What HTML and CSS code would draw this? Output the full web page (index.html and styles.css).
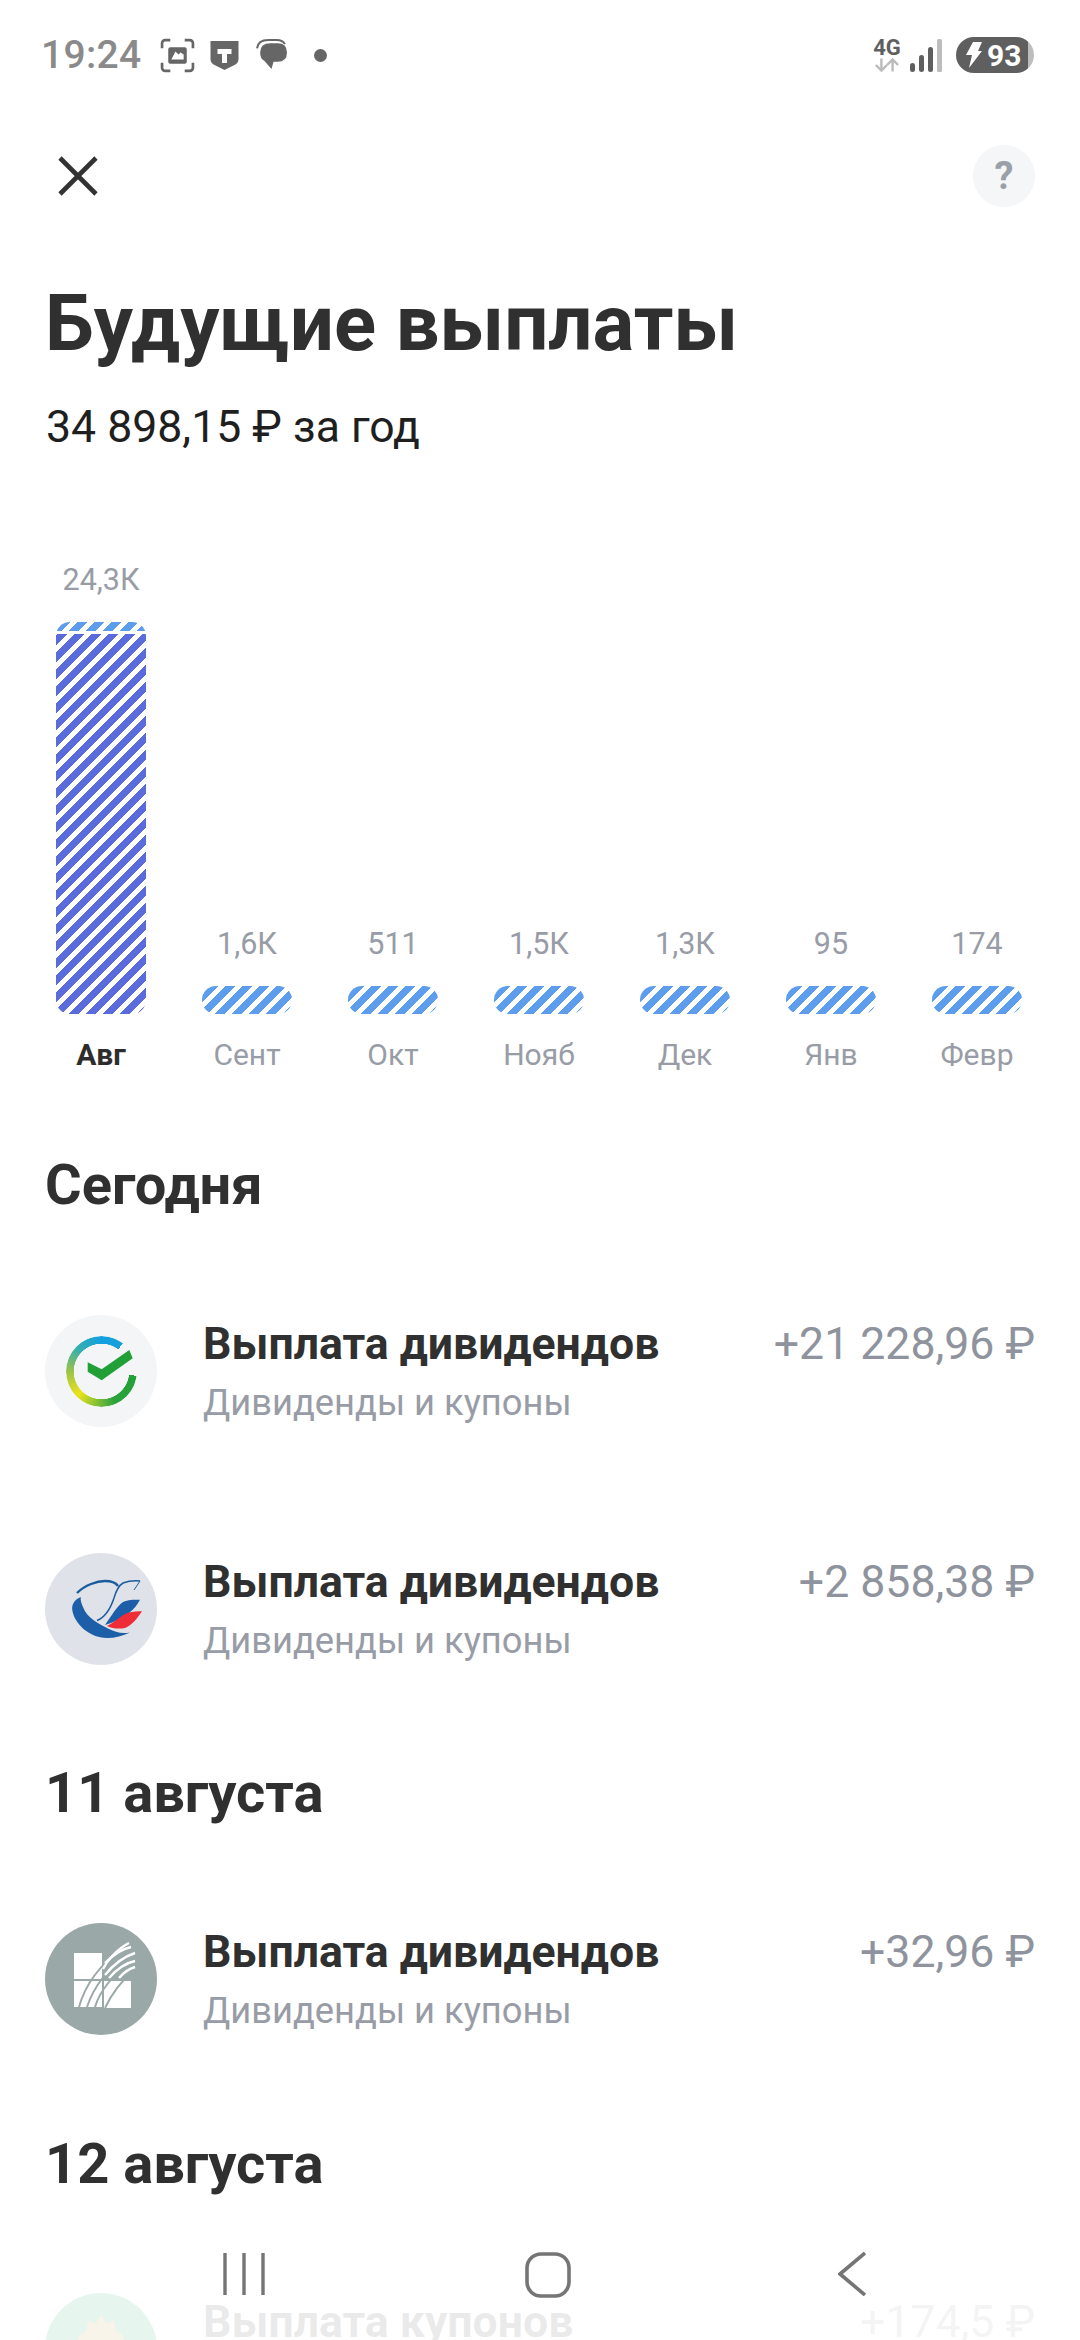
FILE: index.html
```html
<!DOCTYPE html>
<html lang="ru">
<head>
<meta charset="utf-8">
<title>Будущие выплаты</title>
<link rel="stylesheet" href="styles.css">
</head>
<body>
<div class="page">
  <header class="status">
    <div class="status-left">
      <span class="time">19:24</span>
      <svg class="si si-shot" viewBox="0 0 34 34"><path d="M2 10V5a3 3 0 0 1 3-3h5M24 2h5a3 3 0 0 1 3 3v5M32 24v5a3 3 0 0 1-3 3h-5M10 32H5a3 3 0 0 1-3-3v-5" fill="none" stroke="#666" stroke-width="2.6"/><path fill-rule="evenodd" d="M10 9h14a2 2 0 0 1 2 2v12a2 2 0 0 1-2 2H10a2 2 0 0 1-2-2V11a2 2 0 0 1 2-2zm1 12h12v-5l-3-2-2 2-3-3z" fill="#666"/></svg>
      <svg class="si si-t" viewBox="0 0 28 29"><path d="M0 0h28v18q0 4-4 6l-10 5-10-5q-4-2-4-6z" fill="#666"/><path d="M7 8h14v5h-4.500v9h-5v-9H7z" fill="#fff"/></svg>
      <svg class="si si-chat" viewBox="0 0 31 31"><path d="M1 9q1-8 11-8h8q6 0 8 4" fill="none" stroke="#666" stroke-width="2"/><path d="M14 4h7q9 0 9 9t-9 9h-4l-2 7-7-8Q4 19 4 13q0-9 10-9z" fill="#666"/></svg>
      <span class="dot"></span>
    </div>
    <div class="status-right">
      <div class="net">
        <span class="net-label">4G</span>
        <svg class="net-arrows" viewBox="0 0 28 14"><path d="M8 0v12M2 7l6 6 6-6" fill="none" stroke="#bbb" stroke-width="2.600"/><path d="M20 14V2M14 7l6-6 6 6" fill="none" stroke="#bbb" stroke-width="2.600"/></svg>
      </div>
      <svg class="signal" viewBox="0 0 32 33"><rect x="0" y="24" width="5" height="9" rx="2.500" fill="#5f5f5f"/><rect x="9" y="16" width="5" height="17" rx="2.500" fill="#5f5f5f"/><rect x="18" y="8" width="5" height="25" rx="2.500" fill="#5f5f5f"/><rect x="27" y="0" width="5" height="33" rx="1.500" fill="#bdbdbd"/></svg>
      <div class="battery">
        <svg class="bolt" viewBox="0 0 16 26"><path d="M7 0h9l-4 9h4L3 26l3-13H0z" fill="#fff"/></svg>
        <span>93</span>
      </div>
    </div>
  </header>

  <div class="toolbar">
    <svg class="close" viewBox="0 0 40 40"><path d="M2 2l36 36M38 2L2 38" fill="none" stroke="#333" stroke-width="4.600"/></svg>
    <span class="help">?</span>
  </div>

  <h1 class="title">Будущие выплаты</h1>
  <p class="subtitle">34 898,15 ₽ за год</p>

  <section class="chart">
    <div class="col"><span class="val">24,3К</span><div class="bar bar-big"><div class="bar-cap"></div><div class="bar-main"></div></div><span class="mon mon-active">Авг</span></div>
    <div class="col"><span class="val">1,6К</span><div class="bar bar-small"></div><span class="mon">Сент</span></div>
    <div class="col"><span class="val">511</span><div class="bar bar-small"></div><span class="mon">Окт</span></div>
    <div class="col"><span class="val">1,5К</span><div class="bar bar-small"></div><span class="mon">Нояб</span></div>
    <div class="col"><span class="val">1,3К</span><div class="bar bar-small"></div><span class="mon">Дек</span></div>
    <div class="col"><span class="val">95</span><div class="bar bar-small"></div><span class="mon">Янв</span></div>
    <div class="col"><span class="val">174</span><div class="bar bar-small"></div><span class="mon">Февр</span></div>
  </section>

  <h2 class="day day-today">Сегодня</h2>
  <div class="row row-first">
    <div class="avatar av-sber">
      <div class="sber-ring"></div>
      <svg class="logo" viewBox="0 0 112 112"><path d="M42.700 47.300v9.400l14 8.600 31-22-3.400-8.300-27.600 19.300z" fill="#21a038"/></svg>
    </div>
    <div class="row-text"><div class="row-title">Выплата дивидендов</div><div class="row-sub">Дивиденды и купоны</div></div>
    <div class="amount">+21 228,96 ₽</div>
  </div>
  <div class="row row-second">
    <div class="avatar av-rus">
      <svg class="logo" viewBox="0 0 112 112">
        <path d="M35.700 44C29 47 26.500 52 27.300 57C29 70 44 85 62 85C70 85 78 83 85 79.500C76 81 70 79 64 76C54 71 42 65 38 54C36.800 51 35.300 48 35.700 44z" fill="#1c5ea8"/>
        <path d="M32 40C40 32 52 28 60 28C67 28 71 30 73 33" fill="none" stroke="#1a5c9e" stroke-width="2.400"/>
        <path d="M95 28C88 27.500 82 28.500 78 30C73 33 71 38 69 45C66 54 61 64 52 67.500" fill="none" stroke="#1a5c9e" stroke-width="1.500"/>
        <path d="M95 28L89 37" fill="none" stroke="#1a5c9e" stroke-width="1"/>
        <path d="M95 46.700C87 46.500 82 47 78 49C72 53 67 62 60 72C68 70 76 65 84 60C89 56 92 52 95 46.700z" fill="#1c5ea8"/>
        <path d="M97 58.300C90 58 85 59 80 61C73 65 68 70 62 73C68 76 75 76 80 75C86 73 92 66 97 58.300z" fill="#ee2d36"/>
      </svg>
    </div>
    <div class="row-text"><div class="row-title">Выплата дивидендов</div><div class="row-sub">Дивиденды и купоны</div></div>
    <div class="amount">+2 858,38 ₽</div>
  </div>

  <h2 class="day day-11">11 августа</h2>
  <div class="row row-third">
    <div class="avatar av-grain">
      <svg class="logo" viewBox="0 0 112 112">
        <rect x="29" y="30" width="28" height="26" fill="#fff"/>
        <rect x="29" y="58" width="28" height="26" fill="#fff"/>
        <rect x="59" y="58" width="27" height="27" fill="#fff"/>
        <g fill="none" stroke="#9aa9a7" stroke-width="2">
          <path d="M34 84C40 62 56 40 74 30"/>
          <path d="M42 84C48 66 62 44 84 32"/>
          <path d="M50 84C54 70 68 50 88 38"/>
          <path d="M60 85C66 72 74 60 90 46"/>
        </g>
        <g fill="none" stroke="#fff" stroke-width="2.400">
          <path d="M58 46C62 38 72 26 84 20"/>
          <path d="M60 40C68 32 76 26 86 24"/>
          <path d="M60 52C68 42 78 34 90 30"/>
          <path d="M64 55C72 46 80 40 90 38"/>
          <path d="M74 55C78 50 84 46 90 44"/>
        </g>
      </svg>
    </div>
    <div class="row-text"><div class="row-title">Выплата дивидендов</div><div class="row-sub">Дивиденды и купоны</div></div>
    <div class="amount">+32,96 ₽</div>
  </div>

  <h2 class="day day-12">12 августа</h2>
  <div class="row row-fourth">
    <div class="avatar av-last">
      <svg class="logo" viewBox="0 0 112 112"><path d="M56 22l5 8 8-2 2 10 9 6-6 9 2 9-20 8-20-8 2-9-6-9 9-6 2-10 8 2z" fill="#b98a1e"/></svg>
    </div>
    <div class="row-text"><div class="row-title">Выплата купонов</div></div>
    <div class="amount">+174,5 ₽</div>
  </div>

  <nav class="navbar">
    <svg class="nav-recent" viewBox="0 0 42 42"><path d="M2 0v42M21 0v42M40 0v42" fill="none" stroke="#757575" stroke-width="3.400"/></svg>
    <svg class="nav-home" viewBox="0 0 46 46"><rect x="2" y="2" width="42" height="42" rx="14" fill="none" stroke="#757575" stroke-width="3.600"/></svg>
    <svg class="nav-back" viewBox="0 0 28 44"><path d="M27 1L2 22l25 21" fill="none" stroke="#757575" stroke-width="3.600"/></svg>
  </nav>
</div>
</body>
</html>
```
FILE: styles.css
```css
* { box-sizing: border-box; }
html, body { margin: 0; padding: 0; background: #fff; }
.page {
  position: relative;
  width: 1080px;
  height: 2340px;
  overflow: hidden;
  font-family: Roboto, "Noto Sans", sans-serif;
  color: #303030;
}

/* status bar */
.status {
  height: 144px;
  padding: 36px 46px 0 41px;
  display: flex;
  justify-content: space-between;
  align-items: flex-start;
}
.status-left, .status-right { display: flex; align-items: center; height: 38px; }
.time { font-size: 39px; font-weight: 500; color: #8a8a8a; width: 119px; line-height: 38px; letter-spacing: .3px; }
.si { display: block; }
.si-shot { width: 35px; height: 35px; }
.si-t { width: 29px; height: 29px; margin-left: 15px; }
.si-chat { width: 32px; height: 32px; margin-left: 17px; }
.dot { width: 13px; height: 13px; border-radius: 50%; background: #666; margin-left: 26px; }
.net { display: flex; flex-direction: column; align-items: center; width: 30px; }
.net-label { font-size: 22px; font-weight: 700; color: #5f5f5f; line-height: 20px; }
.net-arrows { width: 26px; height: 14px; }
.signal { width: 32px; height: 33px; margin-left: 8px; }
.battery {
  width: 78px;
  height: 36px;
  margin-left: 14px;
  border-radius: 18px;
  background: linear-gradient(90deg, #5f5f5f 92%, #bdbdbd 92%);
  display: flex;
  align-items: center;
  padding-left: 10px;
  gap: 5px;
  color: #fff;
  font-size: 30px;
  font-weight: 700;
}
.bolt { width: 16px; height: 26px; }

/* toolbar */
.toolbar {
  height: 64px;
  padding: 0 45px 0 58px;
  display: flex;
  justify-content: space-between;
  align-items: center;
}
.close { width: 40px; height: 40px; }
.help {
  width: 62px;
  height: 62px;
  border-radius: 50%;
  background: #f4f6f7;
  color: #9a9fa8;
  font-size: 38px;
  font-weight: 700;
  display: flex;
  align-items: center;
  justify-content: center;
}

.title { margin: 74px 0 0 45px; font-size: 78px; font-weight: 700; line-height: 84px; }
.subtitle { margin: 35px 0 0 46px; font-size: 44.600px; line-height: 52px; color: #1f1f1f; }

/* chart */
.chart {
  margin: 0 0 0 28px;
  width: 1022px;
  height: 624px;
  display: grid;
  grid-template-columns: repeat(7, 146px);
  align-items: end;
}
.col { display: flex; flex-direction: column; align-items: center; }
.val { font-size: 30.500px; line-height: 44px; color: #989ca6; margin-bottom: 20px; }
.mon { font-size: 30px; line-height: 44px; color: #989ca6; margin-top: 19px; }
.mon-active { color: #2d2d2d; font-weight: 700; }
.bar { width: 90px; border-radius: 14px; overflow: hidden; }
.bar-small {
  height: 28px;
  background: repeating-linear-gradient(-45deg, #5c9ded 0 7px, #fff 7px 12.020px);
}
.bar-big { height: 392px; display: flex; flex-direction: column; }
.bar-cap {
  height: 9px;
  background: repeating-linear-gradient(-45deg, #5c9ded 0 7px, #fff 7px 12.020px);
}
.bar-main {
  margin-top: 3px;
  flex: 1;
  background: repeating-linear-gradient(-45deg, #5a6bdc 0 7px, #fff 7px 12.020px);
}

/* list */
.day { margin: 0 0 0 45px; font-size: 56px; font-weight: 700; line-height: 60px; }
.day-today { margin-top: 78px; }
.day-11 { margin-top: 94px; }
.day-12 { margin-top: 95px; }
.row { display: flex; align-items: flex-start; padding: 0 45px; height: 116px; }
.row-first { margin-top: 100px; }
.row-second { margin-top: 122px; }
.row-third { margin-top: 100px; }
.row-fourth { margin-top: 99px; }
.avatar {
  width: 112px;
  height: 112px;
  border-radius: 50%;
  flex: none;
  display: grid;
  place-items: center;
  overflow: hidden;
}
.avatar > * { grid-area: 1 / 1; }
.logo { width: 112px; height: 112px; display: block; }
.av-sber { background: #f3f5f7; }
.av-rus { background: #dfe2e8; }
.av-grain { background: #9aa9a7; }
.av-last { background: #059b55; }
.sber-ring {
  width: 71px;
  height: 71px;
  border-radius: 50%;
  background: conic-gradient(from 97deg, #21a038 0deg, #2ba33a 60deg, #6cb83b 83deg, #ece31a 128deg, #9cc24a 173deg, #34aeb0 218deg, #12a0e0 263deg, #1aa0dc 300deg, transparent 300deg);
  -webkit-mask: radial-gradient(circle, transparent 27.500px, #000 28px);
  mask: radial-gradient(circle, transparent 27.500px, #000 28px);
}
.row-text { flex: 1; margin-left: 46px; }
.row-title { font-size: 44.600px; font-weight: 700; line-height: 59px; color: #303030; }
.row-sub { font-size: 36.300px; line-height: 58px; color: #989ca6; }
.amount { font-size: 44.600px; line-height: 58px; color: #8e939d; }

/* nav bar */
.navbar {
  position: absolute;
  left: 0;
  right: 0;
  bottom: 0;
  height: 110px;
  background: rgba(255,255,255,.9);
}
.navbar svg { position: absolute; }
.nav-recent { left: 223px; top: 23px; width: 42px; height: 42px; }
.nav-home { left: 525px; top: 22px; width: 46px; height: 46px; }
.nav-back { left: 838px; top: 22px; width: 28px; height: 44px; }
```
